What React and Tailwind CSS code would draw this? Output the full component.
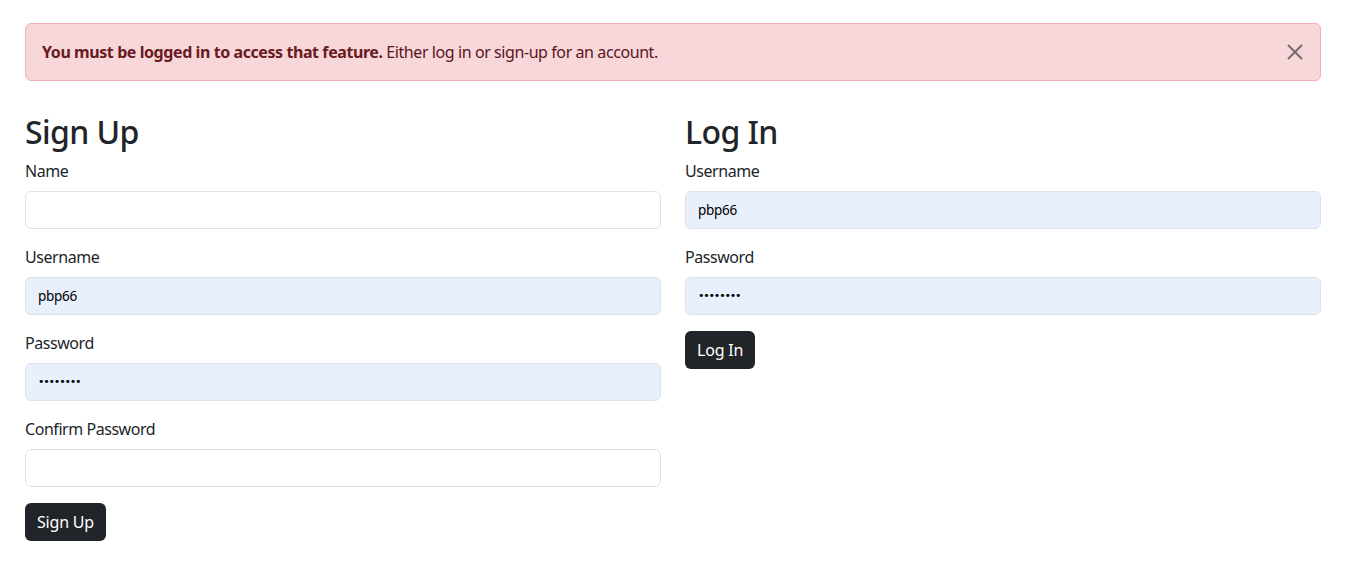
function Field({ label, value, password }) {
  const filled = value !== undefined;
  return (
    <div className="mb-4">
      <label className="block mb-2 text-[16px] leading-6 tracking-[-0.45px] text-[#212529]">{label}</label>
      <div
        className={
          "h-[38px] w-full rounded-[6px] border border-[#dee2e6] px-3 flex items-center " +
          (filled ? "bg-[#e8f0fe]" : "bg-white")
        }
      >
        {filled && (
          <span
            className={
              password
                ? "text-[11px] tracking-[-1.2px] text-black font-['DejaVu_Sans',sans-serif]"
                : "text-[13.5px] tracking-[-0.3px] text-black"
            }
          >
            {value}
          </span>
        )}
      </div>
    </div>
  );
}

function Button({ children }) {
  return (
    <button className="h-[38px] px-3 rounded-[6px] bg-[#212529] text-white text-[16px] leading-6 tracking-[-0.2px]">
      {children}
    </button>
  );
}

export default function App() {
  return (
    <div className="min-h-screen bg-white text-[#212529] font-['Noto_Sans',sans-serif]">
      <div className="pl-[25px] pr-[29px] pt-[23px]">
        <div className="relative mb-4 rounded-[6px] border border-[#f1aeb5] bg-[#f8d7da] px-4 py-4 text-[16px] leading-6 tracking-[-0.42px] text-[#58151c]">
          <strong className="font-bold text-[#6a1a21]">You must be logged in to access that feature.</strong>{" "}
          Either log in or sign-up for an account.
          <button className="absolute right-[17px] top-[20px] opacity-60">
            <svg width="16" height="16" viewBox="0 0 16 16" fill="none" stroke="#212529" strokeWidth="2">
              <path d="M1 1l14 14M15 1L1 15" />
            </svg>
          </button>
        </div>

        <div className="grid grid-cols-2 gap-x-6 pt-4">
          <div>
            <h2 className="text-[32px] leading-[38px] font-medium tracking-[-0.6px] mb-2">Sign Up</h2>
            <Field label="Name" />
            <Field label="Username" value="pbp66" />
            <Field label="Password" value="••••••••" password />
            <Field label="Confirm Password" />
            <Button>Sign Up</Button>
          </div>
          <div>
            <h2 className="text-[32px] leading-[38px] font-medium tracking-[-0.6px] mb-2">Log In</h2>
            <Field label="Username" value="pbp66" />
            <Field label="Password" value="••••••••" password />
            <Button>Log In</Button>
          </div>
        </div>
      </div>
    </div>
  );
}
